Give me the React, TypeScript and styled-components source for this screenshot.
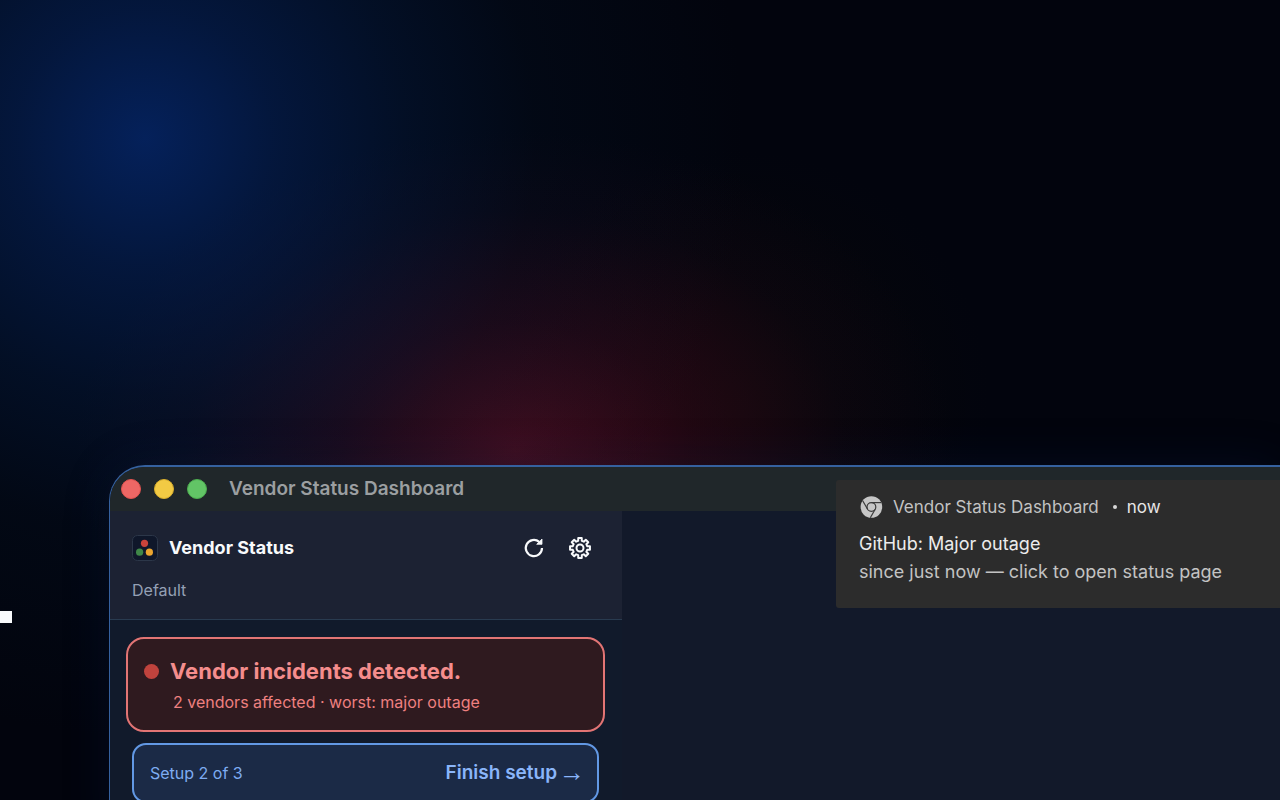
import React from "react";
import styled, { createGlobalStyle } from "styled-components";

const GlobalStyle = createGlobalStyle`
  *, *::before, *::after { box-sizing: border-box; }
  body {
    margin: 0;
    background: #02040d;
    color: #f8fafc;
    font-family: Inter, "Liberation Sans", sans-serif;
  }
  h1, h2, p { margin: 0; }
`;

const Stage = styled.main`
  position: relative;
  display: flex;
  flex-direction: column;
  height: 100vh;
  min-height: 640px;
  overflow: hidden;
  padding: 465px 0 0 109px;
  background:
    radial-gradient(circle at 145px 138px, rgba(5, 38, 104, 0.85) 0, rgba(5, 36, 94, 0.58) 130px, rgba(4, 36, 84, 0.34) 260px, rgba(4, 30, 60, 0.16) 390px, transparent 600px),
    radial-gradient(ellipse 440px 320px at 515px 450px, rgba(82, 14, 32, 0.8) 0, rgba(66, 10, 28, 0.44) 40%, rgba(40, 10, 28, 0.16) 75%, transparent 100%),
    radial-gradient(circle at 740px 400px, rgba(18, 12, 6, 0.4) 0, transparent 250px),
    #02040d;
`;

const Cursor = styled.span`
  position: absolute;
  left: 0;
  top: 611px;
  width: 12px;
  height: 12px;
  background: #f8fafc;
`;

const Window = styled.section`
  position: relative;
  flex: 1 0 auto;
  margin-bottom: -40px;
  border: solid #35619f;
  border-width: 2px 0 0 1px;
  border-top-left-radius: 36px;
  background: #12192a;
  box-shadow: 0 0 50px rgba(16, 50, 110, 0.16);
`;

const TitleBar = styled.header`
  display: flex;
  align-items: center;
  height: 44px;
  padding-left: 11px;
  border-top-left-radius: 34px;
  background: #20272a;
`;

const Lights = styled.div`
  display: flex;
  gap: 13px;
  margin-right: 22px;
`;

const Light = styled.span<{ $fill: string; $edge: string }>`
  width: 20px;
  height: 20px;
  border: 1px solid ${(p) => p.$edge};
  border-radius: 50%;
  background: ${(p) => p.$fill};
`;

const WindowTitle = styled.h1`
  color: #9b9fa1;
  font-size: 19px;
  font-weight: 600;
  line-height: 24px;
`;

const Panel = styled.div`
  width: 512px;
  background: #111a2b;
`;

const PanelHeader = styled.header`
  padding: 20px 25px 17px 22px;
  border-bottom: 1px solid #293b50;
  background: #1c2233;
`;

const Row = styled.div`
  display: flex;
  align-items: center;
`;

const BrandName = styled.h2`
  flex: 1;
  margin-left: 11px;
  font-size: 18px;
  font-weight: 700;
  line-height: 24px;
`;

const IconButton = styled.button`
  display: grid;
  place-items: center;
  width: 34px;
  height: 34px;
  margin-left: 12px;
  padding: 0;
  border: 0;
  background: none;
  color: #f8fafc;
  cursor: pointer;
`;

const ProfileName = styled.p`
  margin-top: 13px;
  color: #94a0b5;
  font-size: 16px;
  line-height: 24px;
`;

const Body = styled.div`
  padding: 17px 17px 0 16px;
`;

const Alert = styled.section`
  padding: 18px 16px 16px;
  border: 2px solid #e27474;
  border-radius: 18px;
  background: #2f1a1f;
`;

const AlertDot = styled.span`
  width: 15px;
  height: 15px;
  margin-right: 11px;
  border-radius: 50%;
  background: #c0433d;
`;

const AlertTitle = styled.h2`
  color: #f58d8d;
  font-size: 22px;
  font-weight: 700;
  line-height: 28px;
`;

const AlertText = styled.p`
  margin: 5px 0 0 29px;
  color: #ee8080;
  font-size: 16px;
  line-height: 24px;
`;

const Setup = styled.section`
  display: flex;
  align-items: center;
  justify-content: space-between;
  height: 60px;
  margin: 11px 6px 0;
  padding: 0 12px 0 16px;
  border: 2px solid #6298e4;
  border-radius: 14px;
  background: #1b2a46;
`;

const SetupText = styled.p`
  color: #7eacf2;
  font-size: 16px;
  line-height: 24px;
`;

const SetupButton = styled.button`
  display: flex;
  align-items: center;
  gap: 2px;
  padding: 0;
  border: 0;
  background: none;
  color: #8ab5fa;
  font: 600 19px/24px Inter, "Liberation Sans", sans-serif;
  cursor: pointer;
`;

const Arrow = styled.span`
  font-family: "Liberation Serif", serif;
  font-size: 26px;
  font-weight: 400;
`;

const Toast = styled.aside`
  position: absolute;
  top: 13px;
  right: 0;
  width: 444px;
  padding: 13px 23px 22px;
  border-radius: 3px 0 0 3px;
  background: #2c2c2c;
  color: #c3c3c3;
  font-size: 18px;
  line-height: 28px;
`;

const ToastSource = styled.span`
  margin-left: 10px;
  font-size: 17px;
`;

const ToastTime = styled.span`
  display: flex;
  align-items: center;
  gap: 10px;
  margin-left: 14px;
  color: #e6e6e6;
  font-size: 17px;

  &::before {
    content: "";
    width: 4px;
    height: 4px;
    border-radius: 50%;
    background: #d8d8d8;
  }
`;

const ToastTitle = styled.p`
  margin-top: 9px;
  color: #ececec;
`;

const BrandIcon = () => (
  <svg width="26" height="26" viewBox="0 0 26 26" aria-hidden="true">
    <rect x="0.5" y="0.5" width="25" height="25" rx="5" fill="#0f172a" stroke="#2c3749" />
    <circle cx="12.5" cy="8.3" r="3.6" fill="#c9433b" />
    <circle cx="7.6" cy="17.2" r="3.6" fill="#3f8748" />
    <circle cx="17.4" cy="17.2" r="3.6" fill="#eba52f" />
  </svg>
);

const RefreshIcon = () => (
  <svg width="22" height="22" viewBox="0 0 22 22" fill="none" stroke="currentColor" strokeWidth="2.2" aria-hidden="true">
    <path d="M19 11A8.1 8.1 0 1 1 16.2 4.9" />
    <path d="M19 2v5.3h-5.3z" fill="currentColor" strokeWidth="0.8" />
  </svg>
);

const teeth = Array.from({ length: 8 }, (_, i) => {
  const point = (deg: number, r: number) => {
    const a = ((i * 45 + deg) * Math.PI) / 180;
    return `${(12 + r * Math.sin(a)).toFixed(2)} ${(12 - r * Math.cos(a)).toFixed(2)}`;
  };
  return `${point(-14, 7.4)}L${point(-10, 10.1)}L${point(10, 10.1)}L${point(14, 7.4)}`;
});

const GearIcon = () => (
  <svg width="24" height="24" viewBox="0 0 24 24" fill="none" stroke="currentColor" strokeWidth="2" strokeLinejoin="round" aria-hidden="true">
    <path d={`M${teeth.join("L")}Z`} />
    <circle cx="12" cy="12" r="3.5" />
  </svg>
);

const BrowserIcon = () => (
  <svg width="24" height="24" viewBox="0 0 24 24" fill="none" stroke="#3a3a3a" strokeWidth="1.2" aria-hidden="true">
    <circle cx="12.4" cy="12" r="10.8" fill="#c6c6c6" stroke="none" />
    <circle cx="12.4" cy="12" r="4.4" />
    <path d="M12.4 7.6h9.6" />
    <path d="M8.6 14.2L3.7 5.7" />
    <path d="M16.2 14.2L11.3 22.7" />
  </svg>
);

export default function App() {
  return (
    <>
      <GlobalStyle />
      <Stage>
        <Cursor />
        <Window>
          <TitleBar>
            <Lights>
              <Light $fill="#ed6765" $edge="#e35350" />
              <Light $fill="#f2ca44" $edge="#dbb02c" />
              <Light $fill="#62c466" $edge="#4cae4f" />
            </Lights>
            <WindowTitle>Vendor Status Dashboard</WindowTitle>
          </TitleBar>
          <Panel>
            <PanelHeader>
              <Row>
                <BrandIcon />
                <BrandName>Vendor Status</BrandName>
                <IconButton aria-label="Refresh">
                  <RefreshIcon />
                </IconButton>
                <IconButton aria-label="Settings">
                  <GearIcon />
                </IconButton>
              </Row>
              <ProfileName>Default</ProfileName>
            </PanelHeader>
            <Body>
              <Alert>
                <Row>
                  <AlertDot />
                  <AlertTitle>Vendor incidents detected.</AlertTitle>
                </Row>
                <AlertText>2 vendors affected · worst: major outage</AlertText>
              </Alert>
              <Setup>
                <SetupText>Setup 2 of 3</SetupText>
                <SetupButton>
                  Finish setup <Arrow>→</Arrow>
                </SetupButton>
              </Setup>
            </Body>
          </Panel>
          <Toast>
            <Row>
              <BrowserIcon />
              <ToastSource>Vendor Status Dashboard</ToastSource>
              <ToastTime>now</ToastTime>
            </Row>
            <ToastTitle>GitHub: Major outage</ToastTitle>
            <p>since just now — click to open status page</p>
          </Toast>
        </Window>
      </Stage>
    </>
  );
}
